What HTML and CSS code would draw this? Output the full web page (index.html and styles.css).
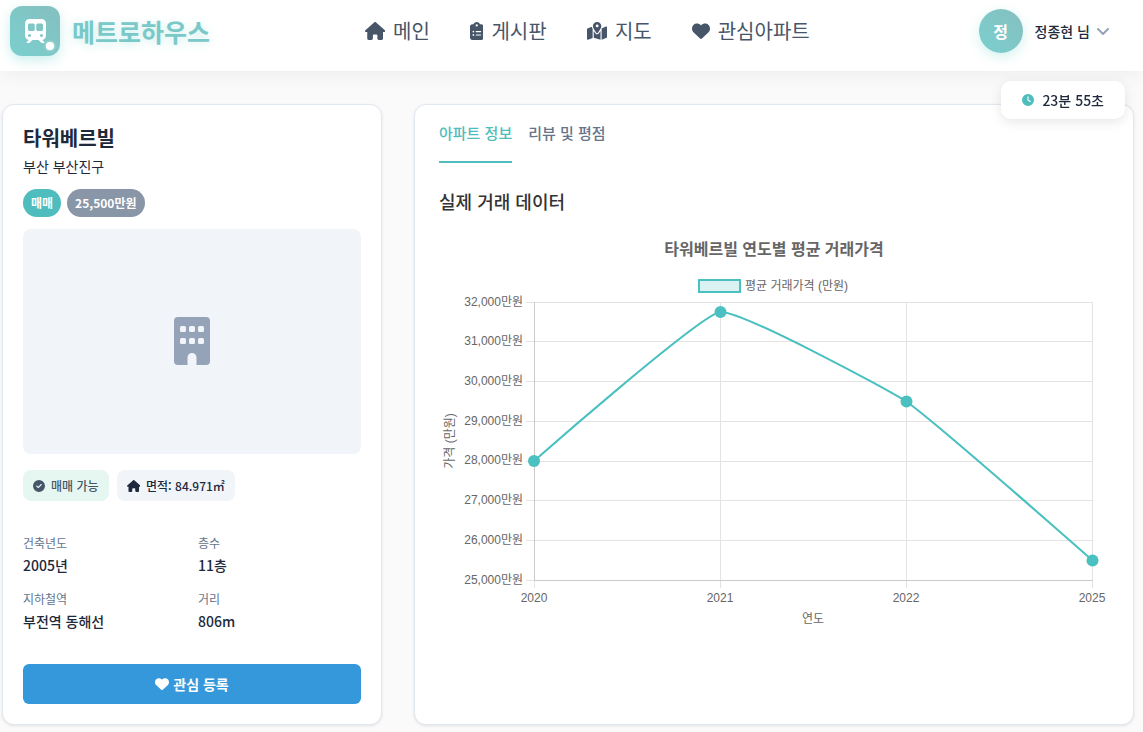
FILE: index.html
```html
<!DOCTYPE html>
<html lang="ko">
<head>
<meta charset="utf-8">
<meta name="viewport" content="width=device-width, initial-scale=1">
<title>메트로하우스</title>
<link rel="stylesheet" href="styles.css">
</head>
<body>
<header class="header">
  <a class="brand" href="#">
    <span class="brand-mark">
      <svg class="brand-icon" viewBox="0 0 448 512" aria-hidden="true"><path d="M96 0C43 0 0 43 0 96V352c0 48 35.2 87.7 81.1 94.9l-46 46C28.1 499.9 33.1 512 43 512H82.7c8.5 0 16.6-3.4 22.6-9.4L160 448H288l54.6 54.6c6 6 14.1 9.4 22.6 9.4H405c10 0 15-12.1 7.9-19.1l-46-46c46-7.1 81.1-46.9 81.1-94.9V96c0-53-43-96-96-96H96zM64 128c0-17.7 14.3-32 32-32h80c17.7 0 32 14.3 32 32v96c0 17.7-14.3 32-32 32H96c-17.7 0-32-14.3-32-32V128zM272 96h80c17.7 0 32 14.3 32 32v96c0 17.7-14.3 32-32 32H272c-17.7 0-32-14.3-32-32V128c0-17.7 14.3-32 32-32zM64 352a32 32 0 1 1 64 0 32 32 0 1 1 -64 0zm288-32a32 32 0 1 1 0 64 32 32 0 1 1 0-64z"/></svg>
      <span class="brand-dot"></span>
    </span>
    <span class="brand-name">메트로하우스</span>
  </a>
  <nav class="nav">
    <a class="nav-link" href="#"><svg class="icon-nav" viewBox="0 0 576 512" aria-hidden="true"><path d="M575.8 255.5c0 18-15 32.1-32 32.1l-32 0 .7 160.2c0 2.7-.2 5.4-.5 8.1l0 16.2c0 22.1-17.9 40-40 40l-16 0c-1.1 0-2.2 0-3.3-.1c-1.4 .1-2.8 .1-4.2 .1L416 512l-24 0c-22.1 0-40-17.9-40-40l0-24 0-64c0-17.7-14.3-32-32-32l-64 0c-17.7 0-32 14.3-32 32l0 64 0 24c0 22.1-17.9 40-40 40l-24 0-31.9 0c-1.5 0-3-.1-4.5-.2c-1.2 .1-2.4 .2-3.6 .2l-16 0c-22.1 0-40-17.9-40-40l0-112c0-.9 0-1.9 .1-2.8l0-69.7-32 0c-18 0-32-14-32-32.1c0-9 3-17 10-24L266.4 8c7-7 15-8 22-8s15 2 21 7L564.8 231.5c8 7 12 15 11 24z"/></svg>메인</a>
    <a class="nav-link" href="#"><svg class="icon-nav" viewBox="0 0 384 512" aria-hidden="true"><path d="M192 0c-41.8 0-77.4 26.7-90.5 64H64C28.7 64 0 92.7 0 128V448c0 35.3 28.7 64 64 64H320c35.3 0 64-28.7 64-64V128c0-35.3-28.7-64-64-64H282.5C269.4 26.7 233.8 0 192 0zm0 64a32 32 0 1 1 0 64 32 32 0 1 1 0-64zM72 272a24 24 0 1 1 48 0 24 24 0 1 1 -48 0zm104-16H304c8.8 0 16 7.2 16 16s-7.2 16-16 16H176c-8.8 0-16-7.2-16-16s7.2-16 16-16zM72 368a24 24 0 1 1 48 0 24 24 0 1 1 -48 0zm88 0c0-8.8 7.2-16 16-16H304c8.8 0 16 7.2 16 16s-7.2 16-16 16H176c-8.8 0-16-7.2-16-16z"/></svg>게시판</a>
    <a class="nav-link" href="#"><svg class="icon-nav" viewBox="0 0 576 512" aria-hidden="true"><path d="M408 120c0 54.6-73.1 151.9-105.2 192c-7.7 9.6-22 9.6-29.6 0C241.1 271.9 168 174.6 168 120C168 53.7 221.7 0 288 0s120 53.7 120 120zm8 80.4c3.5-6.9 6.7-13.8 9.6-20.6c.5-1.2 1-2.5 1.5-3.7l116-46.4C558.9 123.4 576 135 576 152V422.8c0 9.8-6 18.6-15.1 22.3L416 503V200.4zM137.6 138.3c2.4 14.1 7.2 28.3 12.8 41.5c2.9 6.8 6.1 13.7 9.6 20.6V451.8L32.9 502.7C17.1 509 0 497.4 0 480.4V209.6c0-9.8 6-18.6 15.1-22.3l122.6-49zM327.8 332c13.9-17.4 35.7-45.7 56.2-77V504.3L192 449.4V255c20.5 31.3 42.3 59.6 56.2 77c20.5 25.6 59.1 25.6 79.6 0zM288 152a40 40 0 1 0 0-80 40 40 0 1 0 0 80z"/></svg>지도</a>
    <a class="nav-link" href="#"><svg class="icon-nav" viewBox="0 0 512 512" aria-hidden="true"><path d="M47.6 300.4L228.3 469.1c7.5 7 17.4 10.9 27.7 10.9s20.2-3.9 27.7-10.9L464.4 300.4c30.4-28.3 47.6-68 47.6-109.5v-5.8c0-69.9-50.5-129.5-119.4-141C347 36.5 300.6 51.4 268 84L256 96 244 84c-32.6-32.6-79-47.5-124.6-39.9C50.5 55.6 0 115.2 0 185.1v5.8c0 41.5 17.2 81.2 47.6 109.5z"/></svg>관심아파트</a>
  </nav>
  <button class="user" type="button">
    <span class="avatar">정</span>
    <span class="user-name">정종현 님</span>
    <svg class="chevron" viewBox="0 0 12 10" aria-hidden="true"><path d="M1 3l5 5 5-5"/></svg>
  </button>
</header>

<div class="timer" role="timer">
  <svg class="icon-small" viewBox="0 0 512 512" aria-hidden="true"><path d="M256 0a256 256 0 1 1 0 512A256 256 0 1 1 256 0zM232 120V256c0 8 4 15.5 10.7 20l96 64c11 7.4 25.9 4.4 33.3-6.7s4.4-25.9-6.7-33.3L280 243.2V120c0-13.3-10.7-24-24-24s-24 10.7-24 24z"/></svg>
  <span>23분 55초</span>
</div>

<main class="layout">
  <section class="card summary">
    <h1 class="apt-name">타워베르빌</h1>
    <p class="apt-place">부산 부산진구</p>
    <div class="badges">
      <span class="badge badge-deal">매매</span>
      <span class="badge badge-price">25,500만원</span>
    </div>
    <div class="photo">
      <svg class="photo-icon" viewBox="0 0 36 48" aria-hidden="true"><path fill-rule="evenodd" d="M4 0H32a4 4 0 0 1 4 4V44a4 4 0 0 1-4 4H22.500V40.500a4.500 4.500 0 0 0-9 0V48H4a4 4 0 0 1-4-4V4a4 4 0 0 1 4-4zM7.500 9A1.500 1.500 0 0 0 6 10.500v3A1.500 1.500 0 0 0 7.500 15h3a1.500 1.500 0 0 0 1.500-1.500v-3A1.500 1.500 0 0 0 10.500 9zm9 0a1.500 1.500 0 0 0-1.500 1.500v3a1.500 1.500 0 0 0 1.500 1.500h3a1.500 1.500 0 0 0 1.500-1.500v-3A1.500 1.500 0 0 0 19.500 9zm9 0a1.500 1.500 0 0 0-1.500 1.500v3a1.500 1.500 0 0 0 1.500 1.500h3a1.500 1.500 0 0 0 1.500-1.500v-3A1.500 1.500 0 0 0 28.500 9zM7.500 21A1.500 1.500 0 0 0 6 22.500v3A1.500 1.500 0 0 0 7.500 27h3a1.500 1.500 0 0 0 1.500-1.500v-3A1.500 1.500 0 0 0 10.500 21zm9 0a1.500 1.500 0 0 0-1.500 1.500v3a1.500 1.500 0 0 0 1.500 1.500h3a1.500 1.500 0 0 0 1.500-1.500v-3A1.500 1.500 0 0 0 19.500 21zm9 0a1.500 1.500 0 0 0-1.500 1.500v3a1.500 1.500 0 0 0 1.500 1.500h3a1.500 1.500 0 0 0 1.500-1.500v-3A1.500 1.500 0 0 0 28.500 21z"/></svg>
    </div>
    <div class="tags">
      <span class="tag tag-open"><svg class="icon-small" viewBox="0 0 512 512" aria-hidden="true"><path d="M256 512A256 256 0 1 0 256 0a256 256 0 1 0 0 512zM369 209L241 337c-9.400 9.400-24.600 9.400-33.900 0l-64-64c-9.400-9.400-9.400-24.600 0-33.900s24.600-9.400 33.900 0l47 47L335 175c9.400-9.400 24.600-9.400 33.900 0s9.400 24.600 0 33.900z"/></svg>매매 가능</span>
      <span class="tag tag-area"><svg class="icon-small" viewBox="0 0 576 512" aria-hidden="true"><path d="M575.8 255.5c0 18-15 32.1-32 32.1l-32 0 .7 160.2c0 2.7-.2 5.4-.5 8.1l0 16.2c0 22.1-17.9 40-40 40l-16 0c-1.1 0-2.2 0-3.3-.1c-1.4 .1-2.8 .1-4.2 .1L416 512l-24 0c-22.1 0-40-17.9-40-40l0-24 0-64c0-17.7-14.3-32-32-32l-64 0c-17.7 0-32 14.3-32 32l0 64 0 24c0 22.1-17.9 40-40 40l-24 0-31.9 0c-1.5 0-3-.1-4.5-.2c-1.2 .1-2.4 .2-3.6 .2l-16 0c-22.1 0-40-17.9-40-40l0-112c0-.9 0-1.9 .1-2.8l0-69.7-32 0c-18 0-32-14-32-32.1c0-9 3-17 10-24L266.4 8c7-7 15-8 22-8s15 2 21 7L564.8 231.5c8 7 12 15 11 24z"/></svg>면적: 84.971㎡</span>
    </div>
    <dl class="facts">
      <div class="fact"><dt>건축년도</dt><dd>2005년</dd></div>
      <div class="fact"><dt>층수</dt><dd>11층</dd></div>
      <div class="fact"><dt>지하철역</dt><dd>부전역 동해선</dd></div>
      <div class="fact"><dt>거리</dt><dd>806m</dd></div>
    </dl>
    <button class="favorite" type="button"><svg class="icon-heart" viewBox="0 0 512 512" aria-hidden="true"><path d="M47.6 300.4L228.3 469.1c7.5 7 17.4 10.9 27.7 10.9s20.2-3.9 27.7-10.9L464.4 300.4c30.4-28.3 47.6-68 47.6-109.5v-5.8c0-69.9-50.5-129.5-119.4-141C347 36.5 300.6 51.4 268 84L256 96 244 84c-32.6-32.6-79-47.5-124.6-39.9C50.5 55.6 0 115.2 0 185.1v5.8c0 41.5 17.2 81.2 47.6 109.5z"/></svg>관심 등록</button>
  </section>

  <section class="card detail">
    <div class="tabs" role="tablist">
      <button class="tab tab-active" type="button" role="tab" aria-selected="true">아파트 정보</button>
      <button class="tab" type="button" role="tab" aria-selected="false">리뷰 및 평점</button>
    </div>
    <h2 class="section-title">실제 거래 데이터</h2>
    <svg class="chart" viewBox="0 0 670 400" role="img" aria-label="타워베르빌 연도별 평균 거래가격">
      <text class="chart-title" x="335" y="27" text-anchor="middle">타워베르빌 연도별 평균 거래가격</text>
      <rect class="legend-box" x="260" y="52" width="41" height="12"/>
      <text x="306" y="62">평균 거래가격 (만원)</text>
      <path class="grid" d="M87 74.5H654M87 113.5H654M87 153.5H654M87 193.5H654M87 233.5H654M87 272.5H654M87 312.5H654M87 352.5H95M95.5 352V360M281.5 74V360M467.5 74V360M653.500 74V360"/>
      <path class="axis" d="M95.500 74V352.500H654"/>
      <g text-anchor="end">
        <text x="84" y="78">32,000만원</text>
        <text x="84" y="117">31,000만원</text>
        <text x="84" y="157">30,000만원</text>
        <text x="84" y="197">29,000만원</text>
        <text x="84" y="236">28,000만원</text>
        <text x="84" y="276">27,000만원</text>
        <text x="84" y="316">26,000만원</text>
        <text x="84" y="356">25,000만원</text>
      </g>
      <g text-anchor="middle">
        <text x="95" y="374">2020</text>
        <text x="281" y="374">2021</text>
        <text x="467" y="374">2022</text>
        <text x="653" y="374">2025</text>
        <text x="374" y="395">연도</text>
        <text transform="translate(15 213) rotate(-90)">가격 (만원)</text>
      </g>
      <path class="series" d="M95 233C95 233 261 87 281 84C299 81 450 162 467 173.500C486 185 653 332 653 332"/>
      <g class="points"><circle cx="95" cy="233" r="6"/><circle cx="281.500" cy="84" r="6"/><circle cx="467.500" cy="173.500" r="6"/><circle cx="653.500" cy="332.500" r="6"/></g>
    </svg>
  </section>
</main>
</body>
</html>
```
FILE: styles.css
```css
* { box-sizing: border-box; }

body {
  margin: 0;
  min-height: 100vh;
  background: #fafafa;
  color: #1e293b;
  font-family: "Noto Sans CJK KR", sans-serif;
  font-size: 14px;
  line-height: 22px;
}

a { color: inherit; text-decoration: none; }
button { font: inherit; border: 0; background: none; padding: 0; cursor: pointer; }
h1, h2, p, dl, dd { margin: 0; }
svg { display: block; flex: none; fill: currentColor; }

.header {
  display: flex;
  align-items: center;
  justify-content: space-between;
  padding: 0 34px 9px 10px;
  height: 71px;
  background: #fff;
  box-shadow: 0 2px 20px rgba(0, 0, 0, 0.06);
}

.brand { display: flex; align-items: center; gap: 12px; }
.brand-mark {
  position: relative;
  display: flex;
  align-items: center;
  justify-content: center;
  width: 50px;
  height: 50px;
  border-radius: 12px;
  color: #fff;
  background: linear-gradient(45deg, #7acfcf, #86bfbf);
  box-shadow: 0 4px 12px rgba(78, 205, 196, 0.3);
}
.brand-icon { height: 24px; }
.brand-dot {
  position: absolute;
  right: 6px;
  bottom: 6px;
  width: 8px;
  height: 8px;
  border-radius: 50%;
  background: #fff;
  box-shadow: 0 0 3px rgba(255, 255, 255, 0.8);
}
.brand-name {
  font-size: 25px;
  font-weight: 700;
  line-height: 36px;
  color: #7ac8c8;
  text-shadow: 0 2px 8px rgba(78, 205, 196, 0.3);
}

.nav { display: flex; align-items: center; gap: 40px; margin-right: 14px; }
.nav-link {
  display: flex;
  align-items: center;
  gap: 8px;
  font-size: 20px;
  line-height: 28px;
  color: #475569;
}
.icon-nav { height: 18px; }

.user { display: flex; align-items: center; color: #1e293b; }
.avatar {
  width: 44px;
  height: 44px;
  margin-right: 12px;
  border-radius: 50%;
  background: linear-gradient(45deg, #7acfcf, #86bfbf);
  box-shadow: 0 4px 12px rgba(78, 205, 196, 0.25);
  color: #fff;
  font-size: 16px;
  font-weight: 700;
  line-height: 44px;
  text-align: center;
}
.user-name { font-weight: 500; }
.chevron {
  width: 12px;
  margin-left: 7px;
  fill: none;
  stroke: #94a3b8;
  stroke-width: 2;
  stroke-linecap: round;
  stroke-linejoin: round;
}

.timer {
  position: fixed;
  top: 81px;
  right: 18px;
  display: flex;
  align-items: center;
  gap: 8px;
  padding: 8px 21px;
  border-radius: 10px;
  background: #fff;
  box-shadow: 0 3px 12px rgba(0, 0, 0, 0.1);
  font-weight: 500;
}
.timer .icon-small { color: #4fbdbd; }
.icon-small { height: 12px; }

.layout {
  display: grid;
  grid-template-columns: 380px 1fr;
  gap: 32px;
  padding: 33px 9px 7px 2px;
}
.card {
  border: 1px solid #e2e8f0;
  border-radius: 12px;
  background: #fff;
  box-shadow: 0 1px 3px rgba(0, 0, 0, 0.1);
}

.summary { padding: 20px; }
.apt-name { font-size: 20px; font-weight: 700; line-height: 26px; }
.apt-place { margin-top: 4px; }
.badges { display: flex; gap: 6px; margin: 12px 0; }
.badge {
  padding: 5px 8px;
  border-radius: 14px;
  color: #fff;
  font-size: 12px;
  font-weight: 700;
  line-height: 18px;
}
.badge-deal { background: #4fbdbd; }
.badge-price { background: #8896a8; }
.photo {
  display: flex;
  align-items: center;
  justify-content: center;
  aspect-ratio: 3 / 2;
  padding-bottom: 1px;
  border-radius: 8px;
  background: #f1f5f9;
  color: #94a3b8;
}
.photo-icon { height: 48px; }
.tags { display: flex; gap: 8px; margin-top: 16px; }
.tag {
  display: flex;
  align-items: center;
  gap: 6px;
  padding: 6px 10px;
  border-radius: 8px;
  font-size: 12px;
  font-weight: 500;
  line-height: 19px;
}
.tag-open { background: #e6f7f1; color: #475569; }
.tag-area { background: #f1f5f9; }
.facts {
  display: grid;
  grid-template-columns: 1fr 1fr;
  gap: 14px 12px;
  margin: 33px 0 32px;
}
.fact { display: grid; gap: 2px; }
.fact dt { color: #64748b; font-size: 12px; line-height: 18px; }
.fact dd { font-weight: 500; }
.favorite {
  display: flex;
  align-items: center;
  justify-content: center;
  gap: 4px;
  width: 100%;
  height: 40px;
  border-radius: 6px;
  background: #3498db;
  color: #fff;
  font-weight: 700;
}
.icon-heart { height: 14px; }

.detail { padding: 17px 24px 24px; }
.tabs { display: flex; gap: 16px; }
.tab {
  padding-bottom: 17px;
  border-bottom: 2px solid transparent;
  color: #64748b;
  font-size: 15px;
  font-weight: 500;
}
.tab-active { border-color: #4fbdbd; color: #4fbdbd; }
.section-title {
  margin: 25px 0 14px;
  color: #333;
  font-size: 18px;
  font-weight: 500;
  line-height: 26px;
}

.chart {
  width: 100%;
  fill: #666;
  font-family: "Liberation Sans", "Noto Sans CJK KR", sans-serif;
  font-size: 12px;
}
.chart-title { font-size: 16px; font-weight: 700; }
.legend-box { fill: #dbf2f2; stroke: #4bc0c0; stroke-width: 2; }
.grid { fill: none; stroke: #e3e3e3; }
.axis { fill: none; stroke: #cacaca; }
.series { fill: none; stroke: #4bc0c0; stroke-width: 2; }
.points { fill: #4bc0c0; }
```
